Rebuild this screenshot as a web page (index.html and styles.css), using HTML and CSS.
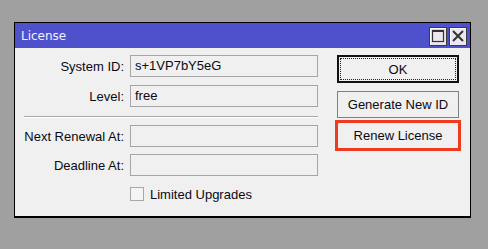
FILE: index.html
```html
<!DOCTYPE html>
<html>
<head>
<meta charset="utf-8">
<link rel="stylesheet" href="styles.css">
</head>
<body>
<div class="window">
  <div class="titlebar">
    <span class="title">License</span>
    <div class="tb-btns">
      <span class="tb-btn">
        <svg width="16" height="16" viewBox="0 0 16 16"><rect x="2.5" y="2.5" width="11" height="11" fill="none" stroke="#333" stroke-width="1.2"/><rect x="2" y="2" width="12" height="2" fill="#333"/></svg>
      </span>
      <span class="tb-btn">
        <svg width="16" height="16" viewBox="0 0 16 16"><path d="M3 3 L13 13 M13 3 L3 13" stroke="#333" stroke-width="2" fill="none"/></svg>
      </span>
    </div>
  </div>
  <div class="content">
    <div class="form">
      <div class="row r1"><label class="lbl">System ID:</label><div class="field">s+1VP7bY5eG</div></div>
      <div class="row r2"><label class="lbl">Level:</label><div class="field">free</div></div>
      <div class="sep"></div>
      <div class="row r3"><label class="lbl">Next Renewal At:</label><div class="field"></div></div>
      <div class="row r4"><label class="lbl">Deadline At:</label><div class="field"></div></div>
      <div class="check-row"><span class="checkbox"></span><span class="check-lbl">Limited Upgrades</span></div>
    </div>
    <div class="actions">
      <div class="btn btn-ok"><span>OK</span></div>
      <div class="btn btn-gen">Generate New ID</div>
      <div class="btn btn-renew">Renew License</div>
    </div>
  </div>
</div>
</body>
</html>
```
FILE: styles.css
```css
html, body {
  margin: 0;
  padding: 0;
  background: #a0a0a0;
  width: 488px;
  height: 249px;
  overflow: hidden;
  font-family: "Liberation Sans", Arial, sans-serif;
  font-size: 13px;
  color: #0a0a14;
}
.window {
  box-sizing: border-box;
  margin: 22px 0 0 14px;
  width: 457px;
  height: 196px;
  border: 1px solid #000;
  border-bottom-width: 2px;
  background: #f0f0f0;
  display: flex;
  flex-direction: column;
}
.titlebar {
  height: 25px;
  background: #4f51cc;
  display: flex;
  align-items: center;
  justify-content: space-between;
  padding: 0 3px 0 6px;
}
.title {
  font-family: "DejaVu Sans", Verdana, sans-serif;
  font-size: 12px;
  color: #f2f0fb;
  padding-top: 1px;
}
.tb-btns {
  display: flex;
  gap: 2px;
  padding-top: 1px;
}
.tb-btn {
  box-sizing: border-box;
  width: 18px;
  height: 19px;
  background: #ece7ef;
  border: 1px solid #3a3a3a;
  box-shadow: inset 1px 1px 0 #fff;
  display: flex;
  align-items: center;
  justify-content: center;
}
.content {
  display: flex;
  padding-top: 7px;
}
.form {
  display: flex;
  flex-direction: column;
  width: 303px;
}
.row {
  display: flex;
  align-items: center;
  height: 22px;
  gap: 6px;
}
.r2 { margin-top: 8px; }
.r3 { margin-top: 7px; }
.r4 { margin-top: 7px; }
.lbl {
  width: 109px;
  text-align: right;
  white-space: nowrap;
}
.field {
  box-sizing: border-box;
  width: 188px;
  height: 22px;
  border: 1px solid #a6a6a6;
  padding-left: 4px;
  line-height: 20px;
}
.sep {
  margin: 9px 0 0 9px;
  height: 0;
  width: 294px;
  border-top: 1px solid #a8a8a8;
  border-bottom: 1px solid #fff;
}
.check-row {
  display: flex;
  align-items: center;
  margin: 11px 0 0 115px;
  height: 14px;
  gap: 6px;
}
.checkbox {
  box-sizing: border-box;
  width: 14px;
  height: 14px;
  border: 1px solid #a8a8a8;
  background: #f4f4f4;
}
.actions {
  margin-left: 17px;
  width: 126px;
  display: flex;
  flex-direction: column;
}
.btn {
  box-sizing: border-box;
  display: flex;
  align-items: center;
  justify-content: center;
  background: #f0f0f0;
}
.btn-ok {
  margin: 0 2px;
  height: 28px;
  border: 2px solid #111;
  position: relative;
}
.btn-ok::after {
  content: "";
  position: absolute;
  inset: 1px;
  border: 1px dotted #222;
}
.btn-gen {
  margin: 8px 2px 0;
  height: 27px;
  border: 1px solid #808080;
}
.btn-renew {
  margin-top: 2px;
  height: 31px;
  border: 3px solid #f03a1f;
  padding-bottom: 1px;
}
```
